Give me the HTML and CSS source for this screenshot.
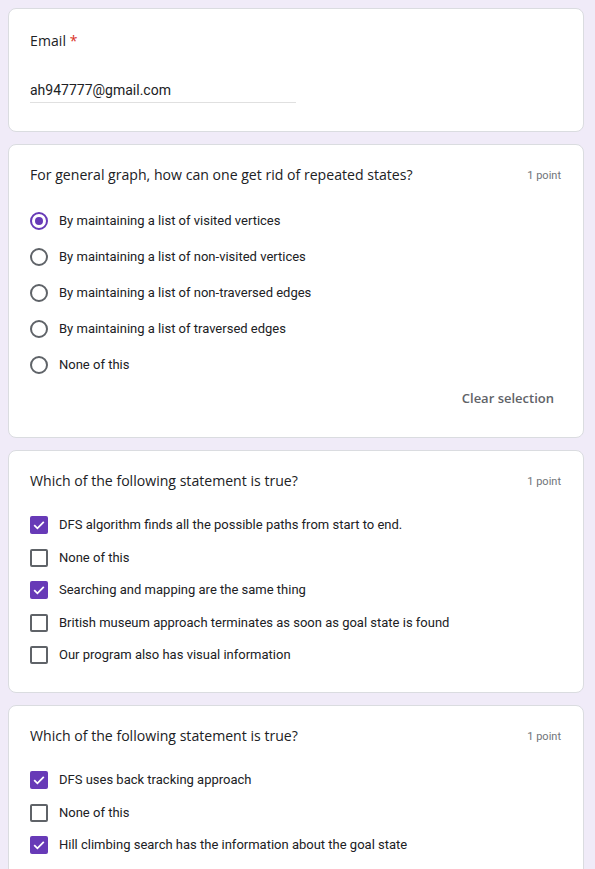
FILE: index.html
```html
<!DOCTYPE html>
<html>
<head>
<meta charset="utf-8">
<link rel="stylesheet" href="styles.css">
</head>
<body>
<div class="page">
  <section class="card email-card">
    <div class="label">Email <span class="req">*</span></div>
    <div class="input">ah947777@gmail.com</div>
  </section>

  <section class="card">
    <div class="qhead">
      <div class="qtitle">For general graph, how can one get rid of repeated states?</div>
      <div class="points">1 point</div>
    </div>
    <div class="options radios">
      <div class="opt"><span class="radio on"></span><span>By maintaining a list of visited vertices</span></div>
      <div class="opt"><span class="radio"></span><span>By maintaining a list of non-visited vertices</span></div>
      <div class="opt"><span class="radio"></span><span>By maintaining a list of non-traversed edges</span></div>
      <div class="opt"><span class="radio"></span><span>By maintaining a list of traversed edges</span></div>
      <div class="opt"><span class="radio"></span><span>None of this</span></div>
    </div>
    <div class="clear-row"><span class="clear">Clear selection</span></div>
  </section>

  <section class="card">
    <div class="qhead">
      <div class="qtitle">Which of the following statement is true?</div>
      <div class="points">1 point</div>
    </div>
    <div class="options checks">
      <div class="opt"><span class="check on"><svg viewBox="0 0 18 18"><path d="M4.2 9.2l3.2 3.1 6.4-6.4" fill="none" stroke="#fff" stroke-width="1.8"/></svg></span><span>DFS algorithm finds all the possible paths from start to end.</span></div>
      <div class="opt"><span class="check"></span><span>None of this</span></div>
      <div class="opt"><span class="check on"><svg viewBox="0 0 18 18"><path d="M4.2 9.2l3.2 3.1 6.4-6.4" fill="none" stroke="#fff" stroke-width="1.8"/></svg></span><span>Searching and mapping are the same thing</span></div>
      <div class="opt"><span class="check"></span><span>British museum approach terminates as soon as goal state is found</span></div>
      <div class="opt"><span class="check"></span><span>Our program also has visual information</span></div>
    </div>
  </section>

  <section class="card">
    <div class="qhead">
      <div class="qtitle">Which of the following statement is true?</div>
      <div class="points">1 point</div>
    </div>
    <div class="options checks">
      <div class="opt"><span class="check on"><svg viewBox="0 0 18 18"><path d="M4.2 9.2l3.2 3.1 6.4-6.4" fill="none" stroke="#fff" stroke-width="1.8"/></svg></span><span>DFS uses back tracking approach</span></div>
      <div class="opt"><span class="check"></span><span>None of this</span></div>
      <div class="opt"><span class="check on"><svg viewBox="0 0 18 18"><path d="M4.2 9.2l3.2 3.1 6.4-6.4" fill="none" stroke="#fff" stroke-width="1.8"/></svg></span><span>Hill climbing search has the information about the goal state</span></div>
    </div>
  </section>
</div>
</body>
</html>
```

FILE: styles.css
```css
html, body {
  margin: 0;
  padding: 0;
  background: #f0ebf8;
}
body {
  font-family: Roboto, "Liberation Sans", sans-serif;
  color: #202124;
}
.page {
  display: flex;
  flex-direction: column;
  gap: 12px;
  padding: 8px 11px 0 8px;
}
.card {
  background: #fff;
  border: 1px solid #dadce0;
  border-radius: 8px;
  padding: 20px 21px 0 21px;
}
.email-card {
  padding-top: 22px;
  padding-bottom: 28px;
}
.label {
  font-family: "Open Sans", Roboto, sans-serif;
  font-size: 14px;
  line-height: 20px;
  letter-spacing: 0.1px;
}
.req {
  color: #d93025;
}
.input {
  margin-top: 29px;
  width: 266px;
  font-size: 14px;
  line-height: 20px;
  padding-bottom: 2px;
  border-bottom: 1px solid #e0e0e0;
}
.qhead {
  display: flex;
  justify-content: space-between;
  align-items: center;
}
.qtitle {
  font-family: "Open Sans", Roboto, sans-serif;
  font-size: 14.1px;
  line-height: 20px;
}
.points {
  font-size: 11px;
  color: #70757a;
  margin-right: 1px;
}
.options {
  display: flex;
  flex-direction: column;
}
.radios {
  margin-top: 26px;
  gap: 16px;
}
.checks {
  margin-top: 24px;
  gap: 12.5px;
  padding-bottom: 27px;
}
.opt {
  display: flex;
  align-items: center;
  gap: 11px;
  font-size: 13px;
  line-height: 20px;
}
.radio {
  box-sizing: border-box;
  width: 18px;
  height: 18px;
  border: 2px solid #5f6368;
  border-radius: 50%;
  flex: none;
  display: flex;
  align-items: center;
  justify-content: center;
}
.radio.on {
  border-color: #673ab7;
}
.radio.on::after {
  content: "";
  width: 8px;
  height: 8px;
  border-radius: 50%;
  background: #673ab7;
}
.check {
  box-sizing: border-box;
  width: 18px;
  height: 18px;
  border: 2px solid #5f6368;
  border-radius: 2px;
  flex: none;
  display: flex;
}
.check.on {
  border: none;
  background: #673ab7;
}
.check svg {
  width: 18px;
  height: 18px;
}
.clear-row {
  display: flex;
  justify-content: flex-end;
  padding: 13px 8px 29px 0;
}
.clear {
  font-family: "Open Sans", Roboto, sans-serif;
  font-size: 13px;
  font-weight: 600;
  color: #5f6368;
  line-height: 20px;
}
```
